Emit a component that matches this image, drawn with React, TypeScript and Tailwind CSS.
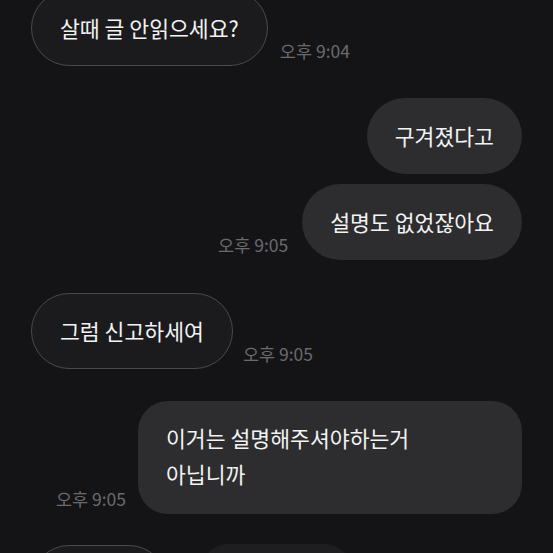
import React from "react";

const font = "font-['Noto_Sans_CJK_KR','Noto_Sans',sans-serif]";

function Received({ children }: { children: React.ReactNode }) {
  return (
    <div className="h-[76px] rounded-full border border-[#4a4a4d] bg-[#1b1b1e] px-7 flex items-center text-[21.6px] leading-[30px] text-[#f3f3f3] whitespace-nowrap">
      {children}
    </div>
  );
}

function Sent({ children }: { children: React.ReactNode }) {
  return (
    <div className="h-[76px] rounded-full bg-[#2d2d30] px-7 flex items-center text-[21.6px] leading-[30px] text-[#f3f3f3] whitespace-nowrap">
      {children}
    </div>
  );
}

function Time({ children }: { children: React.ReactNode }) {
  return (
    <div className="text-[17.5px] leading-[20px] mb-[5px] text-[#6a6a6d] whitespace-nowrap">{children}</div>
  );
}

export default function App() {
  return (
    <div className={`w-[553px] h-[553px] overflow-hidden bg-[#141417] ${font}`}>
      <div className="flex flex-col px-[31px] mt-[-10px]">
        <div className="flex items-end gap-3">
          <Received>살때 글 안읽으세요?</Received>
          <Time>오후 9:04</Time>
        </div>
        <div className="mt-[32px] flex justify-end">
          <Sent>구겨졌다고</Sent>
        </div>
        <div className="mt-[10px] flex justify-end items-end gap-[14px]">
          <Time>오후 9:05</Time>
          <Sent>설명도 없었잖아요</Sent>
        </div>
        <div className="mt-[33px] flex items-end gap-[10px]">
          <Received>그럼 신고하세여</Received>
          <Time>오후 9:05</Time>
        </div>
        <div className="mt-[32px] flex justify-end items-end gap-[12px]">
          <Time>오후 9:05</Time>
          <div className="w-[384px] rounded-[30px] bg-[#2d2d30] pl-7 pr-7 pt-[19px] pb-[22px] text-[21.6px] leading-[36px] text-[#f3f3f3] whitespace-nowrap">
            이거는 설명해주셔야하는거
            <br />
            아닙니까
          </div>
        </div>
        <div className="mt-[30px] flex items-start">
          <div className="mt-[1px] w-[136px] h-[76px] rounded-full border border-[#4a4a4d] bg-[#1b1b1e]" />
          <div className="ml-[35px] w-[149px] h-[76px] rounded-[26px] bg-[#1e1e21]" />
        </div>
      </div>
    </div>
  );
}
